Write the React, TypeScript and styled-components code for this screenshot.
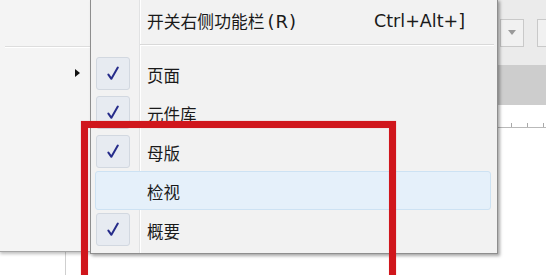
import React from 'react';
import styled, { createGlobalStyle } from 'styled-components';

const GlobalStyle = createGlobalStyle`
  html, body {
    margin: 0;
    padding: 0;
    background: #ffffff;
  }
  * {
    box-sizing: border-box;
  }
`;

interface MenuEntry {
  label: string;
  checked: boolean;
  active?: boolean;
}

const entries: MenuEntry[] = [
  { label: '页面', checked: true },
  { label: '元件库', checked: true },
  { label: '母版', checked: true },
  { label: '检视', checked: false, active: true },
  { label: '概要', checked: true },
];

const CheckIcon: React.FC = () => (
  <svg width="12" height="15" viewBox="0 0 12 15">
    <path d="M1.4 8.6 L4.4 12.8 L10.8 1.6" fill="none" stroke="#262c8a" strokeWidth="2" strokeLinejoin="round" strokeLinecap="round" />
  </svg>
);

export default function App() {
  return (
    <Stage>
      <GlobalStyle />
      <Workspace>
        <Toolbar>
          <DropButton>
            <DropArrow />
          </DropButton>
          <DropButton />
        </Toolbar>
        <Band />
        <Canvas>
          <Ruler>
            <Tick />
            <Tick />
            <Tick />
          </Ruler>
          <Guide />
        </Canvas>
      </Workspace>

      <ParentMenu>
        <ParentHeader />
        <ParentSeparator />
        <ParentRow>
          <SubArrow />
        </ParentRow>
      </ParentMenu>

      <SubMenu>
        <HeaderItem>
          <ItemLabel>
            开关右侧功能栏<Latin>(R)</Latin>
          </ItemLabel>
          <Shortcut>Ctrl+Alt+]</Shortcut>
        </HeaderItem>
        <Separator />
        <ItemList>
          {entries.map(entry => (
            <Row key={entry.label} $active={entry.active}>
              <CheckSlot $checked={entry.checked}>{entry.checked && <CheckIcon />}</CheckSlot>
              <RowLabel>{entry.label}</RowLabel>
            </Row>
          ))}
        </ItemList>
      </SubMenu>

      <Annotation />
    </Stage>
  );
}

const Stage = styled.div`
  position: relative;
  width: 546px;
  height: 275px;
  overflow: hidden;
  background: #ffffff;
  font-family: 'Noto Sans CJK SC', 'Noto Sans', sans-serif;
  color: #1a1a1a;
`;

const Workspace = styled.div`
  display: flex;
  flex-direction: column;
  height: 100%;
`;

const Toolbar = styled.div`
  height: 65px;
  flex: none;
  background: #ebebeb;
  display: flex;
  align-items: center;
  gap: 13px;
  padding-left: 500px;
`;

const DropButton = styled.div`
  flex: none;
  width: 24px;
  height: 28px;
  background: #f1f1f1;
  border: 1px solid #c9c9c9;
  display: flex;
  align-items: center;
  justify-content: center;
`;

const DropArrow = styled.div`
  width: 0;
  height: 0;
  border-left: 4px solid transparent;
  border-right: 4px solid transparent;
  border-top: 5px solid #9a9a9a;
`;

const Band = styled.div`
  height: 40px;
  flex: none;
  background: #cdcdcd;
`;

const Canvas = styled.div`
  flex: 1;
  display: flex;
  flex-direction: column;
  background: #ffffff;
`;

const Ruler = styled.div`
  height: 23px;
  flex: none;
  border-bottom: 1px solid #b9b9b9;
  display: flex;
  align-items: flex-end;
  gap: 15px;
  padding-left: 511px;
`;

const Tick = styled.div`
  width: 1px;
  height: 4px;
  background: #a9a9a9;
`;

const Guide = styled.div`
  flex: 1;
  margin-left: 65px;
  border-left: 1px solid #cfcfcf;
`;

const ParentMenu = styled.div`
  position: absolute;
  left: 0;
  top: 0;
  width: 92px;
  height: 252px;
  background: #f4f4f4;
  border-bottom: 1px solid #a5a5a5;
  box-shadow: 0 2px 3px rgba(0, 0, 0, 0.25);
`;

const ParentHeader = styled.div`
  height: 46px;
`;

const ParentSeparator = styled.div`
  margin-left: 5px;
  height: 2px;
  border-top: 1px solid #dddddd;
  border-bottom: 1px solid #ffffff;
`;

const ParentRow = styled.div`
  height: 50px;
  display: flex;
  align-items: center;
  justify-content: flex-end;
  padding-right: 12px;
`;

const SubArrow = styled.div`
  width: 0;
  height: 0;
  border-top: 4px solid transparent;
  border-bottom: 4px solid transparent;
  border-left: 5px solid #111111;
`;

const SubMenu = styled.div`
  position: absolute;
  left: 90px;
  top: -1px;
  width: 408px;
  height: 255px;
  border: 1px solid #8e8e8e;
  border-top: none;
  background:
    linear-gradient(
      to right,
      transparent 48px,
      #e1e2e3 48px,
      #e1e2e3 49px,
      #ffffff 49px,
      #ffffff 50px,
      transparent 50px
    ),
    #f2f2f2;
  box-shadow: 2px 2px 3px rgba(0, 0, 0, 0.35);
  display: flex;
  flex-direction: column;
`;

const HeaderItem = styled.div`
  height: 45px;
  flex: none;
  display: flex;
  align-items: center;
  padding: 0 32px 2px 56px;
  font-size: 16.8px;
`;

const ItemLabel = styled.span`
  flex: 1;
  white-space: nowrap;
`;

const Latin = styled.span`
  font-family: 'DejaVu Sans', 'Noto Sans', sans-serif;
  font-size: 18px;
  letter-spacing: 1px;
  margin-left: 3px;
`;

const Shortcut = styled.span`
  font-family: 'DejaVu Sans', 'Noto Sans', sans-serif;
  font-size: 17.5px;
  white-space: nowrap;
`;

const Separator = styled.div`
  flex: none;
  height: 2px;
  margin: 0 3px 0 49px;
  border-top: 1px solid #d9d9d9;
  border-bottom: 1px solid #ffffff;
`;

const ItemList = styled.div`
  display: flex;
  flex-direction: column;
  padding-top: 8px;
`;

const Row = styled.div<{ $active?: boolean }>`
  height: 39px;
  margin: 0 6px 0 4px;
  display: flex;
  align-items: center;
  border-radius: 3px;
  border: 1px solid ${props => (props.$active ? '#cde2f3' : 'transparent')};
  background: ${props => (props.$active ? '#e5f0fa' : 'transparent')};
`;

const CheckSlot = styled.div<{ $checked: boolean }>`
  flex: none;
  width: 34px;
  height: 33px;
  display: flex;
  align-items: center;
  justify-content: center;
  border-radius: 3px;
  border: 1px solid ${props => (props.$checked ? '#d2d8e0' : 'transparent')};
  background: ${props => (props.$checked ? '#e7ebf1' : 'transparent')};
`;

const RowLabel = styled.span`
  margin-left: 17px;
  font-size: 16.5px;
  padding-top: 2px;
`;

const Annotation = styled.div`
  position: absolute;
  left: 81px;
  top: 121px;
  width: 315px;
  height: 200px;
  border: 7px solid #d0161c;
  box-shadow: 0 0 1px rgba(208, 22, 28, 0.4), inset 0 0 1px rgba(208, 22, 28, 0.4);
`;
